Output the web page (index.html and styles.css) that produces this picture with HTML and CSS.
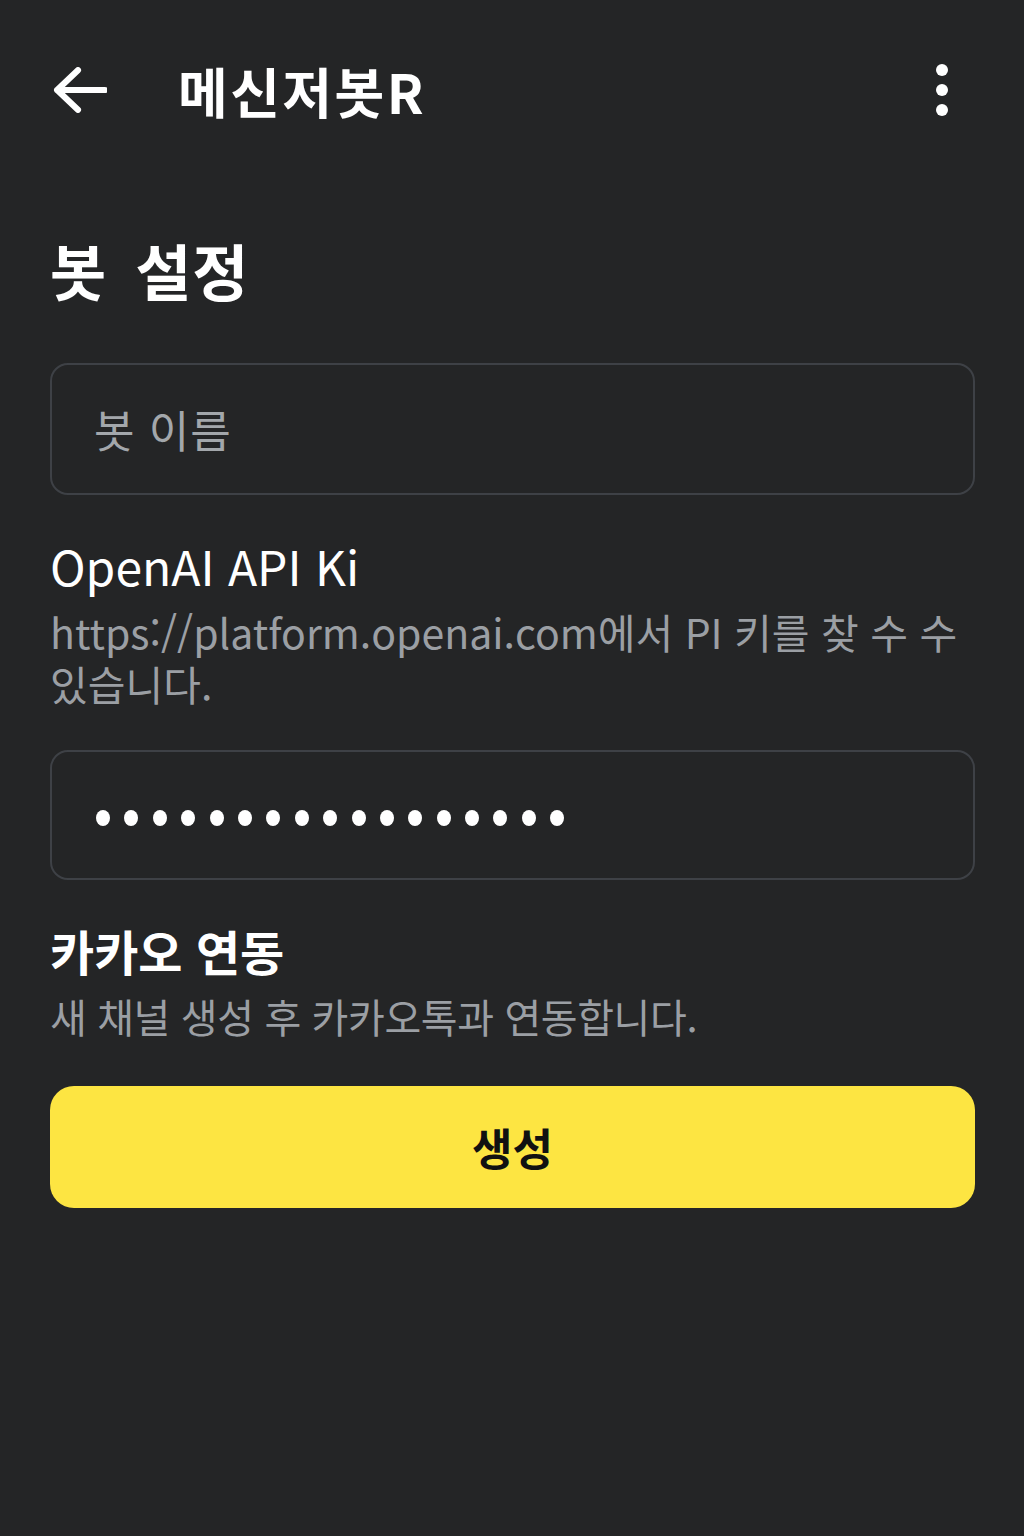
FILE: index.html
```html
<!DOCTYPE html>
<html lang="ko">
<head>
  <meta charset="UTF-8" />
  <meta name="viewport" content="width=device-width, initial-scale=1" />
  <title>메신저봇R</title>
  <link rel="stylesheet" href="styles.css">
</head>
<body>

  <header class="top-bar">
    <button class="icon-btn back-btn" title="뒤로">
      <svg viewBox="0 0 52 44" class="back-icon">
        <path d="M4 22 H50 M24 3 L4 22 L24 41" />
      </svg>
    </button>
    <div class="app-title">메신저봇R</div>
    <button class="icon-btn more-btn" title="더보기">
      <span class="dot"></span>
      <span class="dot"></span>
      <span class="dot"></span>
    </button>
  </header>

  <main class="content">
    <h1 class="page-title">봇 설정</h1>

    <div class="field">
      <span class="placeholder">봇 이름</span>
    </div>

    <div class="label">OpenAI API Ki</div>
    <p class="help">https://platform.openai.com에서 PI 키를 찾 수 수 있습니다.</p>

    <div class="field field-key">
      <span class="pw"></span><span class="pw"></span><span class="pw"></span><span class="pw"></span><span class="pw"></span><span class="pw"></span><span class="pw"></span><span class="pw"></span><span class="pw"></span><span class="pw"></span><span class="pw"></span><span class="pw"></span><span class="pw"></span><span class="pw"></span><span class="pw"></span><span class="pw"></span><span class="pw"></span>
    </div>

    <h2 class="section-title">카카오 연동</h2>
    <p class="help help-single">새 채널 생성 후 카카오톡과 연동합니다.</p>

    <button class="create-btn">생성</button>
  </main>

</body>
</html>
```

FILE: styles.css
```css
* {
  margin: 0;
  padding: 0;
  box-sizing: border-box;
}
body {
  background-color: #242526;
  color: #fff;
  font-family: "Noto Sans CJK KR", "Noto Sans", sans-serif;
}
.top-bar {
  display: flex;
  align-items: center;
  height: 100px;
  margin-top: 40px;
  padding: 0 62px 0 52px;
}
.icon-btn {
  background: none;
  border: none;
  cursor: pointer;
  display: flex;
  align-items: center;
  justify-content: center;
}
.back-btn {
  width: 56px;
  height: 56px;
}
.back-icon {
  width: 54px;
  height: 46px;
  fill: none;
  stroke: #fff;
  stroke-width: 6;
  stroke-linecap: round;
  stroke-linejoin: round;
}
.app-title {
  margin-left: 70px;
  font-size: 54px;
  font-weight: 700;
  letter-spacing: 2.5px;
  flex: 1;
}
.more-btn {
  flex-direction: column;
  gap: 8px;
  width: 40px;
  height: 60px;
}
.more-btn .dot {
  width: 12px;
  height: 12px;
  border-radius: 50%;
  background-color: #fff;
}
.content {
  padding: 0 49px 0 50px;
}
.page-title {
  margin-top: 94px;
  font-size: 61px;
  font-weight: 700;
  line-height: 72px;
  letter-spacing: 1px;
  word-spacing: 10px;
}
.field {
  margin-top: 57px;
  height: 132px;
  border: 2px solid #3e4146;
  border-radius: 18px;
  display: flex;
  align-items: center;
  padding-left: 42px;
}
.placeholder {
  font-size: 44px;
  color: #a3a7ab;
  letter-spacing: 1px;
}
.label {
  margin-top: 42px;
  font-size: 48px;
  line-height: 56px;
}
.help {
  margin-top: 12px;
  font-size: 41px;
  line-height: 52px;
  color: #9b9fa4;
}
.field-key {
  margin-top: 41px;
  height: 130px;
  gap: 14.4px;
  padding-left: 44px;
  padding-top: 6px;
}
.pw {
  width: 14px;
  height: 16px;
  border-radius: 50%;
  background-color: #fff;
}
.section-title {
  margin-top: 40px;
  font-size: 48px;
  font-weight: 700;
  line-height: 60px;
}
.help-single {
  margin-top: 10px;
  font-size: 40px;
  letter-spacing: -0.4px;
}
.create-btn {
  display: block;
  width: 100%;
  margin-top: 44px;
  height: 122px;
  border: none;
  border-radius: 24px;
  background-color: #fde542;
  color: #111;
  font-family: inherit;
  font-size: 44px;
  font-weight: 700;
  cursor: pointer;
}
```
